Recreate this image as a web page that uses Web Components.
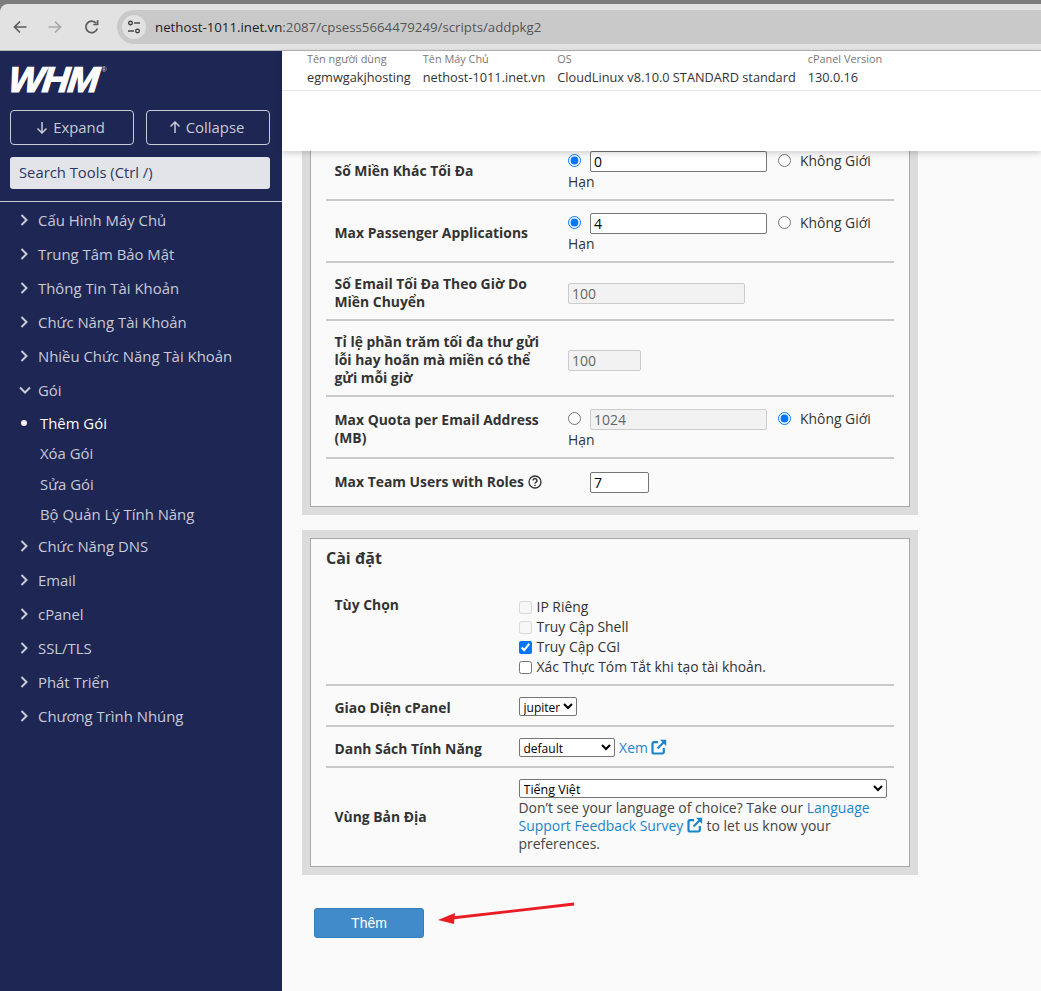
<!DOCTYPE html>
<html lang="vi"><head><meta charset="utf-8"><title>WHM</title>
<style>
html,body{margin:0;height:100%;overflow:hidden;background:#fafafa}
body{font:13.9px "Open Sans",sans-serif;color:#333;display:flex;flex-direction:column;height:991px}
</style></head>
<body>
<x-browser-bar></x-browser-bar>
<x-app>
  <x-sidebar slot="side">
    <x-nav-item>Cấu Hình Máy Chủ</x-nav-item>
    <x-nav-item>Trung Tâm Bảo Mật</x-nav-item>
    <x-nav-item>Thông Tin Tài Khoản</x-nav-item>
    <x-nav-item>Chức Năng Tài Khoản</x-nav-item>
    <x-nav-item>Nhiều Chức Năng Tài Khoản</x-nav-item>
    <x-nav-item open>Gói</x-nav-item>
    <x-nav-sub active>Thêm Gói</x-nav-sub>
    <x-nav-sub>Xóa Gói</x-nav-sub>
    <x-nav-sub>Sửa Gói</x-nav-sub>
    <x-nav-sub>Bộ Quản Lý Tính Năng</x-nav-sub>
    <x-nav-item>Chức Năng DNS</x-nav-item>
    <x-nav-item>Email</x-nav-item>
    <x-nav-item>cPanel</x-nav-item>
    <x-nav-item>SSL/TLS</x-nav-item>
    <x-nav-item>Phát Triển</x-nav-item>
    <x-nav-item>Chương Trình Nhúng</x-nav-item>
  </x-sidebar>
  <x-top-info slot="top"></x-top-info>

  <x-card style="margin-top:-21px">
    <x-row h="62" label-w="233" vtop><span slot="label">Số Miền Khác Tối Đa</span><x-limit value="0" checked="field"></x-limit></x-row>
    <x-row h="62" label-w="233" vtop><span slot="label">Max Passenger Applications</span><x-limit value="4" checked="field"></x-limit></x-row>
    <x-row h="58" label-w="233"><span slot="label">Số Email Tối Đa Theo Giờ Do Miền Chuyển</span><x-plain-input value="100" w="177" disabled></x-plain-input></x-row>
    <x-row h="76" label-w="233"><span slot="label">Tỉ lệ phần trăm tối đa thư gửi lỗi hay hoãn mà miền có thể gửi mỗi giờ</span><x-plain-input value="100" w="73" disabled></x-plain-input></x-row>
    <x-row h="62" label-w="233" vtop><span slot="label">Max Quota per Email Address (MB)</span><x-limit value="1024" checked="none"></x-limit></x-row>
    <x-row h="47" label-w="233" last lpad="0 0 2px"><span slot="label">Max Team Users with Roles <x-help></x-help></span><x-plain-input value="7" w="59" indent="22"></x-plain-input></x-row>
  </x-card>

  <x-card style="margin-top:15px" heading="Cài đặt">
    <x-row h="104" label-w="184" top><span slot="label">Tùy Chọn</span><x-checks></x-checks></x-row>
    <x-row h="41" label-w="184"><span slot="label">Giao Diện cPanel</span><x-pick w="58" text="jupiter"></x-pick></x-row>
    <x-row h="41" label-w="184"><span slot="label">Danh Sách Tính Năng</span><x-pick w="96" text="default"></x-pick> <x-link ext low>Xem</x-link></x-row>
    <x-row h="98" label-w="184" last lpad="0"><span slot="label">Vùng Bản Địa</span><x-locale></x-locale></x-row>
  </x-card>

  <x-submit>Thêm</x-submit>
  <x-arrow slot="over"></x-arrow>
</x-app>

<script>
function def(name, html){
  customElements.define(name, class extends HTMLElement{
    constructor(){super();this.attachShadow({mode:'open'});}
    connectedCallback(){
      this.shadowRoot.innerHTML = typeof html==='function'?html(this):html;
    }
  });
}
const EXT = `<svg width="16" height="16" viewBox="0 0 16 16" fill="none" stroke="currentColor" stroke-width="2.200" style="vertical-align:-2px"><path d="M7 3.200H3a1.500 1.500 0 0 0-1.500 1.500v8.300A1.500 1.500 0 0 0 3 14.500h8.300A1.500 1.500 0 0 0 12.800 13V9"/><path d="M6.500 9.500 13 3"/><path d="M9 .8h6.200V7z" fill="currentColor" stroke="none"/></svg>`;

def('x-browser-bar',`<style>
:host{display:block;height:51px;background:#7d7d7d;flex:none}
.bar{box-sizing:border-box;height:47px;margin-top:4px;background:#e2e2e2;border-radius:8px 0 0 0;border-bottom:1px solid #b4b4b4;display:flex;align-items:center;position:relative}
.ic{display:flex;width:20px;height:20px;flex:none}
.pill{margin-left:15px;flex:1;height:34px;background:#c9c9c9;border-radius:17px 0 0 17px;display:flex;align-items:center}
.tune{width:24px;height:24px;border-radius:50%;background:#e1e1e1;margin-left:5px;display:flex;align-items:center;justify-content:center;flex:none}
.url{margin-left:9px;font:13.25px "Open Sans",sans-serif;color:#555;white-space:nowrap}
.url b{font-weight:400;color:#222}
</style><div class="bar">
<span class="ic" style="margin-left:10px"><svg width="20" height="20" fill="none" stroke="#5b5b5b" stroke-width="1.700"><path d="M16.500 10H4.500M10 4.500 4.500 10l5.500 5.500"/></svg></span>
<span class="ic" style="margin-left:15px"><svg width="20" height="20" fill="none" stroke="#a9a9a9" stroke-width="1.700"><path d="M3.500 10h12M10 4.500l5.500 5.500-5.500 5.500"/></svg></span>
<span class="ic" style="margin-left:17px"><svg width="20" height="20" fill="none" stroke="#5b5b5b" stroke-width="1.700"><path d="M15.300 11.500a5.800 5.800 0 1 1-1-5.200"/><path d="M15.600 3.200v4.300h-4.300" /></svg></span>
<div class="pill"><span class="tune"><svg width="16" height="16" fill="none" stroke="#333" stroke-width="1.300"><circle cx="4.500" cy="4" r="1.800"/><path d="M8 4h6"/><circle cx="11.500" cy="12" r="1.800"/><path d="M2 12h6"/></svg></span>
<span class="url"><b>nethost-1011.inet.vn</b>:2087/cpsess5664479249/scripts/addpkg2</span></div>
</div>`);

def('x-app',`<style>
:host{display:flex;flex:1;min-height:0;position:relative}
.side{width:282px;flex:none;display:flex}
.main{flex:1;min-width:0;display:flex;flex-direction:column;background:#fafafa}
.top{position:relative;z-index:2;flex:none;display:block}
.scroll{flex:1;overflow:hidden;padding-left:20px;width:616px}
</style>
<div class="side"><slot name="side"></slot></div>
<div class="main"><div class="top"><slot name="top"></slot></div><div class="scroll"><slot></slot></div></div>
<slot name="over"></slot>`);

def('x-sidebar',`<style>
:host{display:block;width:282px;background:#1e2653;color:#c8cad8;font:14.9px "Open Sans",sans-serif}
.logo{height:59px;box-sizing:border-box;padding:13px 0 0 7px;color:#fff;display:flex;align-items:flex-start}
.wm{font:italic 900 36px/32px "Liberation Sans",sans-serif;letter-spacing:-1.500px;-webkit-text-stroke:1.200px #fff;transform:skewX(-6deg) scaleX(1.040);transform-origin:left bottom;display:inline-block}
.r{font:7px/8px "Liberation Sans",sans-serif;color:#d5d6de;margin:2px 0 0 9px}
.btns{display:flex;gap:12px;margin:0 12px 12px 10px}
.btn{flex:1;height:35px;box-sizing:border-box;border:1px solid #c8cbd9;border-radius:4px;display:flex;align-items:center;justify-content:center;gap:5px;color:#c8cad8;padding:0 2px 2px 0}
.search{margin:0 12px 0 10px;height:32px;background:#e3e4ea;border-radius:3px;color:#2d3663;font-size:14.8px;line-height:30px;padding-left:9px;box-sizing:border-box}
hr{border:0;height:1px;background:#c8cbd9;margin:12px 0 0}
nav{display:flex;flex-direction:column;padding-top:1px}
</style>
<div class="logo"><span class="wm">WHM</span><span class="r">®</span></div>
<div class="btns">
 <div class="btn"><svg width="12" height="13" fill="none" stroke="#c8cad8" stroke-width="1.500" style="margin:2px 0 0 -1px"><path d="M6 1v11M1.500 7.500 6 12l4.500-4.500"/></svg>Expand</div>
 <div class="btn"><svg width="12" height="13" fill="none" stroke="#c8cad8" stroke-width="1.500" style="margin:2px 0 0 -1px"><path d="M6 12V1M1.500 5.500 6 1l4.500 4.500"/></svg>Collapse</div>
</div>
<div class="search">Search Tools (Ctrl /)</div>
<hr>
<nav><slot></slot></nav>`);

def('x-nav-item',h=>`<style>
:host{display:flex;align-items:center;height:34px;padding-left:19px;box-sizing:border-box}
.i{width:19px;display:flex;flex:none}
</style><span class="i">${h.hasAttribute('open')
 ?'<svg width="12" height="12" fill="none" stroke="#c8cad8" stroke-width="2"><path d="M1 3.500 6 8.500l5-5"/></svg>'
 :'<svg width="12" height="12" fill="none" stroke="#c8cad8" stroke-width="2"><path d="M2.500 1 7.500 6l-5 5"/></svg>'}</span><slot></slot>`);

def('x-nav-sub',h=>`<style>
:host{display:flex;align-items:center;height:30.330px;padding-left:21px;box-sizing:border-box;${h.hasAttribute('active')?'color:#fff;margin-top:.7px;':''}}
.d{width:19px;flex:none;display:flex}
.d i{width:6px;height:6px;border-radius:50%;background:${h.hasAttribute('active')?'#fbeef2':'transparent'}}
</style><span class="d"><i></i></span><slot></slot>`);

def('x-top-info',`<style>
:host{display:block;height:100px;background:#fff;box-shadow:0 2px 6px rgba(0,0,0,.18);font:12.75px "Open Sans",sans-serif;color:#333}
.row{display:flex;gap:12px;padding:0 0 0 25px;height:39px;border-bottom:1px solid #e6e6e6}
.c{display:flex;flex-direction:column}
small{font-size:10.9px;color:#777;line-height:15px}
span{line-height:20px;margin-top:1px}
</style><div class="row">
<div class="c"><small>Tên người dùng</small><span>egmwgakjhosting</span></div>
<div class="c"><small>Tên Máy Chủ</small><span>nethost-1011.inet.vn</span></div>
<div class="c"><small>OS</small><span>CloudLinux v8.10.0 STANDARD standard</span></div>
<div class="c"><small>cPanel Version</small><span>130.0.16</span></div>
</div>`);

def('x-card',h=>`<style>
:host{display:block;width:616px;box-sizing:border-box;border:8px solid #dcdcdc}
.in{border:1px solid #a9a9a9;padding:0 15px;background:#fafafa}
h3{margin:0;font:700 16px/22px "Open Sans",sans-serif;height:43px;padding-top:8px;box-sizing:border-box;color:#333}
</style><div class="in">${h.getAttribute('heading')?`<h3>${h.getAttribute('heading')}</h3>`:''}<slot></slot></div>`);

def('x-row',h=>{const t=h.hasAttribute('top');const vt=h.hasAttribute('vtop');const lp=h.getAttribute('lpad');return `<style>
:host{display:flex;box-sizing:border-box;height:${h.getAttribute('h')}px;${h.hasAttribute('last')?'':'border-bottom:2px solid #c9c9c9;'}padding-left:8.500px;align-items:center}
.l{width:${h.getAttribute('label-w')}px;flex:none;box-sizing:border-box;font-weight:700;line-height:18px;color:#333;${t?'align-self:flex-start;padding:14px 16px 0 0;':(lp!==null?`padding:${lp};padding-right:16px;`:'padding:4px 16px 0 0;')}}
.v{flex:1;min-width:0;padding-right:8px;${t?'align-self:flex-start;padding-top:15px;':''}${vt?'align-self:flex-start;padding-top:11px;':''}}
</style><div class="l"><slot name="label"></slot></div><div class="v"><slot></slot></div>`;});

const inputCss = `input[type=text]{box-sizing:border-box;height:21px;font:14px "Open Sans",sans-serif;padding:0 3px;border:1px solid #767676;border-radius:2px;background:#fff;color:#000;vertical-align:top;outline:0}
input[type=text]:disabled{background:#f2f2f2;border-color:#ccc;color:#666}`;

def('x-limit',h=>{const f=h.getAttribute('checked')==='field';return `<style>
:host{display:block;line-height:21px;margin-left:.5px}
${inputCss}
input[type=radio]{margin:4px 0 0;width:13px;height:13px;vertical-align:top}
input[type=text]{width:177px;margin:1px 11px -2px 9px}
.t{margin-left:9px}
</style><input type="radio" name="r" ${f?'checked':''}><input type="text" value="${h.getAttribute('value')}" ${f?'':'disabled'}><input type="radio" name="r" ${f?'':'checked'}><span class="t">Không Giới</span> Hạn`;});

def('x-plain-input',h=>`<style>:host{display:block;margin-left:.5px;${h.getAttribute('indent')?`padding-left:${h.getAttribute('indent')}px;`:''}${h.hasAttribute('disabled')?'padding-top:4px;':''}}
${inputCss}
input[type=text]{width:${h.getAttribute('w')}px;display:block}</style><input type="text" value="${h.getAttribute('value')}" ${h.hasAttribute('disabled')?'disabled':''}>`);

def('x-help',`<style>:host{display:inline-block;vertical-align:-2px}svg{display:block}</style><svg width="14" height="14" viewBox="0 0 14 14" fill="none" stroke="#333" stroke-width="1.300"><circle cx="7" cy="7" r="6"/><path d="M5 5.500a2 1.900 0 1 1 3.100 1.600c-.8.5-1.100.8-1.100 1.500" stroke-width="1.500"/><path d="M7 9.700v1.400" stroke-width="1.500"/></svg>`);

def('x-checks',`<style>:host{display:block;line-height:20px}
label{display:flex;align-items:center;gap:5px;height:20px}
input{margin:0;width:13px;height:13px}
input:disabled{opacity:.75}
</style>
<label><input type="checkbox" disabled>IP Riêng</label>
<label><input type="checkbox" disabled>Truy Cập Shell</label>
<label><input type="checkbox" checked>Truy Cập CGI</label>
<label><input type="checkbox">Xác Thực Tóm Tắt khi tạo tài khoản.</label>`);

def('x-pick',h=>`<style>:host{display:inline-block;vertical-align:middle}
select{width:${h.getAttribute('w')}px;height:19px;font:12px "Open Sans",sans-serif;color:#000;background:#fff;border:1px solid #767676;border-radius:2px;padding:0;display:block}
</style><select><option>${h.getAttribute('text')}</option></select>`);

def('x-link',h=>`<style>:host{color:#1a85cc;${h.hasAttribute('low')?'vertical-align:-2px;margin-left:1px;':''}}a{color:inherit;text-decoration:none}</style><a href="#"><slot></slot>${h.hasAttribute('ext')?' '+EXT:''}</a>`);

def('x-locale',`<style>:host{display:block;line-height:18px;margin-top:-2px;color:#444;font-size:13.95px}
select{width:368px;height:19px;font:12.5px "Open Sans",sans-serif;color:#000;background:#fff;border:1px solid #767676;border-radius:2px;padding:0;display:block;margin:-1px 0 1px}
</style><select><option>Tiếng Việt</option></select>Don’t see your language of choice? Take our <x-link>Language Support Feedback Survey</x-link><x-link ext></x-link> to let us know your preferences.`);

def('x-submit',`<style>:host{display:block;margin:33px 0 0 12px}
button{width:110px;height:30px;background:#428bca;border:1px solid #357ebd;border-radius:3px;color:#fff;font:14px "Liberation Sans",sans-serif;padding:0;display:block}
</style><button><slot></slot></button>`);

def('x-arrow',`<style>:host{position:absolute;left:430px;top:840px;width:150px;height:40px;pointer-events:none;z-index:3}</style>
<svg width="150" height="40" style="display:block"><path d="M144 13 22 27" stroke="#ea1c24" stroke-width="2.800" fill="none"/><path d="M8 29 25 22 24 33z" fill="#ea1c24"/></svg>`);
</script>
</body></html>
